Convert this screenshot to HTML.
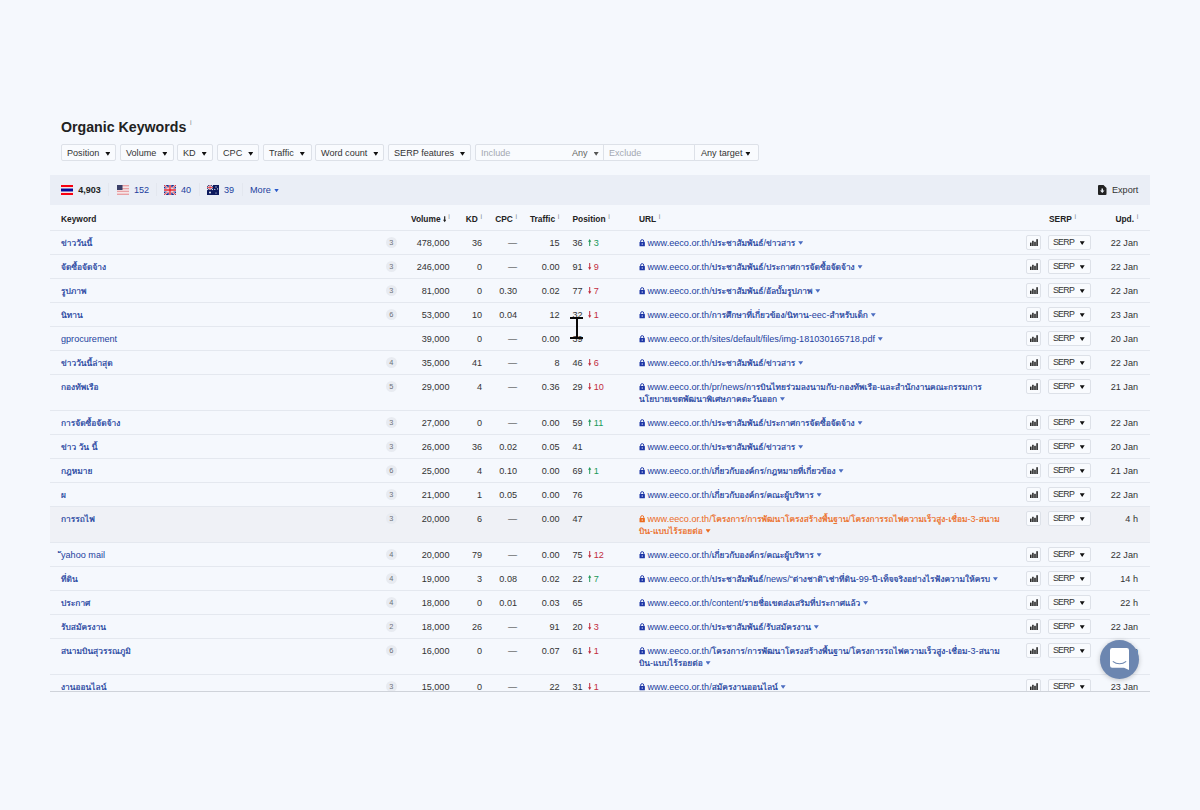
<!DOCTYPE html>
<html lang="th"><head><meta charset="utf-8"><title>Organic Keywords</title>
<style>
*{box-sizing:border-box;margin:0;padding:0}
html,body{width:1200px;height:810px;overflow:hidden}
body{background:#f5f8fd;font-family:"Liberation Sans","Loma","Noto Sans Thai","Noto Sans CJK SC",sans-serif;font-size:9.1px;line-height:12px;color:#333;position:relative}
.t{font-size:8.4px;-webkit-text-stroke:0.22px}
a{color:#1c3f9e;text-decoration:none}
h1{position:absolute;left:61px;top:118px;font-size:14.2px;line-height:18px;font-weight:bold;color:#222;white-space:nowrap}
sup.i{font-size:7px;color:#858b96;font-weight:normal;position:relative;top:0;margin-left:2.6px;vertical-align:top;line-height:8px}
.filters{position:absolute;left:61px;top:144.4px;height:17px;white-space:nowrap}
.fb{position:absolute;top:0;height:17px;border:1px solid #dde1e8;border-radius:2px;background:#f9fbfe;color:#333;line-height:17.4px;padding-left:5px;white-space:nowrap}
.fb em,.sb em{display:inline-block;width:5px;height:3.7px;background:#111;clip-path:polygon(0 0,100% 0,50% 100%);vertical-align:middle;margin-left:6px;position:relative;top:-0.2px}
.ph{color:#a3a8b1}
.bar{position:absolute;left:50px;top:175px;width:1100px;height:30px;background:#eaeef6}
.bar span,.bar a,.bar i{position:absolute;top:9px;line-height:12px;white-space:nowrap}
.bar .flag{top:10px;width:12px;height:10px;overflow:hidden}
.bar i.sep{top:8px;width:1px;height:13px;background:#e3e7ef}
.hd{position:absolute;left:50px;top:205px;width:1100px;height:26px;border-bottom:1px solid #e4e8ef;font-weight:bold;font-size:8.4px;color:#222}
.hd span{position:absolute;top:7.6px;line-height:12px;white-space:nowrap}
.hd sup.i{top:0.5px}
.tbl{position:absolute;left:50px;top:231px;width:1100px;height:461px;overflow:hidden;border-bottom:1px solid #cfd3da}
.row{position:relative;width:1100px;border-bottom:1px solid #e4e8ef;white-space:nowrap}
.row.hl{background:#eff1f6}
.row>*{position:absolute;top:5.6px;line-height:12px}
.kw{left:11px}
.wc{left:335.8px;top:5.8px!important;width:11px;height:11px;border-radius:6px;background:#e8ebf1;color:#6b7078;font-size:7.4px;line-height:11px!important;text-align:center}
.vol{right:700.5px}.kd{right:668px}.cpc{right:633px}.cpc.dash{right:633px}.tr{right:590.5px}
.pos{left:522.5px}
.pos i{font-style:normal;margin-left:5.5px}
.pos i svg{display:inline-block;width:3.4px;height:7px;margin-right:2.3px;vertical-align:-0.9px;fill:currentColor}
.pos i.u{color:#21995a}.pos i.d{color:#c22d3d}
.url{left:589px;color:#1c3f9e}
.url .lk{display:inline-block;width:6.4px;height:7.7px;margin-right:2.1px;vertical-align:-1px;color:#1c35a6}
.url em{display:inline-block;width:5px;height:3.5px;background:#4a6cc0;clip-path:polygon(0 0,100% 0,50% 100%);margin-left:2.8px;vertical-align:0.8px}
.hl .url,.hl .url a,.hl .url .lk{color:#ec6b1e}
.hl .url em{background:#ec6b1e}
.cb{left:976px;top:4px!important;width:15.4px;height:15px;border:1px solid #dde1e8;border-radius:2px;background:#f9fbfe}
.cb svg{position:absolute;left:2.9px;top:3px;width:8px;height:7.4px;fill:#2b2b2b}
.sb{left:998px;top:4px!important;width:43px;height:15px;letter-spacing:-0.7px;border:1px solid #dde1e8;border-radius:2px;background:#f9fbfe;font-size:8.8px;line-height:12.4px!important;padding-left:3.9px;color:#333}
.sb em{position:absolute;left:30.7px;top:5.2px;margin:0}
.upd{right:12px}
.chat{position:absolute;left:1099.8px;top:639.5px;width:39.2px;height:39.2px;border-radius:50%;background:#6c86b0;box-shadow:0 1px 5px rgba(0,0,0,.22)}
.chat svg{position:absolute;left:10px;top:8.9px;width:19px;height:22px}
.cur{position:absolute;left:570px;top:317.1px;width:13px;height:22.2px}
.cur:before{content:"";position:absolute;left:5.5px;top:0;width:2.1px;height:22.2px;background:#0a0a0a}
.cur i{position:absolute;left:0;width:13px;height:2px;background:#0a0a0a}
</style></head>
<body>
<h1>Organic Keywords<sup class="i" style="margin-left:3.6px;top:1px">i</sup></h1>
<div class="filters">
<span class="fb" style="left:0;width:55px">Position<em></em></span>
<span class="fb" style="left:59px;width:54px">Volume<em></em></span>
<span class="fb" style="left:116px;width:36px">KD<em></em></span>
<span class="fb" style="left:156px;width:42px">CPC<em></em></span>
<span class="fb" style="left:202px;width:48.5px">Traffic<em></em></span>
<span class="fb" style="left:254px;width:69px">Word count<em></em></span>
<span class="fb" style="left:327px;width:83px">SERP features<em></em></span>
<span class="fb" style="left:414px;width:129px;border-radius:2px 0 0 2px"><span class="ph">Include</span><span style="position:absolute;left:96px;color:#666">Any<em style="background:#555"></em></span></span>
<span class="fb" style="left:542px;width:92px;border-radius:0"><span class="ph">Exclude</span></span>
<span class="fb" style="left:633px;width:65px;border-radius:0 2px 2px 0;padding-left:6px">Any target<em style="margin-left:3px"></em></span>
</div>
<div class="bar">
<span class="flag" style="left:11px"><svg viewBox="0 0 12 9" width="12" height="10" preserveAspectRatio="none" style="display:block"><rect width="12" height="9" fill="#f80010"/><rect y="1.9" width="12" height="5.2" fill="#f4ffff"/><rect y="3.15" width="12" height="2.7" fill="#0a0a96"/></svg></span>
<span style="left:28.3px;font-weight:bold;color:#222;font-size:9px">4,903</span>
<i class="sep" style="left:58px"></i>
<span class="flag" style="left:67px"><svg viewBox="0 0 12 9" width="12" height="10" preserveAspectRatio="none" style="display:block"><rect width="12" height="9" fill="#f7eef0"/><g fill="#e8a0a4"><rect width="12" height="1.3"/><rect y="2.6" width="12" height="1.3"/><rect y="5.1" width="12" height="1.3"/><rect y="7.7" width="12" height="1.3"/></g><rect width="5.5" height="4.5" fill="#3a3f68"/></svg></span>
<a style="left:84px">152</a>
<i class="sep" style="left:106px"></i>
<span class="flag" style="left:114px"><svg viewBox="0 0 12 9" width="12" height="10" preserveAspectRatio="none" style="display:block"><rect width="12" height="9" fill="#1c2f8c"/><path d="M0 0L12 9M12 0L0 9" stroke="#fff" stroke-width="1.7"/><path d="M0 0L12 9M12 0L0 9" stroke="#e0202e" stroke-width="0.9"/><path d="M6 0V9M0 4.5H12" stroke="#fff" stroke-width="2.5"/><path d="M6 0V9M0 4.5H12" stroke="#e0202e" stroke-width="1.4"/></svg></span>
<a style="left:131px">40</a>
<i class="sep" style="left:149px"></i>
<span class="flag" style="left:157px"><svg viewBox="0 0 12 9" width="12" height="10" preserveAspectRatio="none" style="display:block"><rect width="12" height="9" fill="#0d1a5e"/><path d="M0 0L6 4.5M6 0L0 4.5" stroke="#fff" stroke-width="0.9"/><path d="M3 0V4.5M0 2.25H6" stroke="#fff" stroke-width="1.4"/><path d="M3 0V4.5M0 2.25H6" stroke="#e0202e" stroke-width="0.7"/><circle cx="3" cy="6.8" r="0.9" fill="#fff"/><circle cx="9" cy="1.7" r="0.55" fill="#fff"/><circle cx="10.6" cy="3.5" r="0.55" fill="#fff"/><circle cx="9" cy="7.2" r="0.55" fill="#fff"/><circle cx="7.8" cy="4" r="0.55" fill="#fff"/></svg></span>
<a style="left:174px">39</a>
<i class="sep" style="left:192px"></i>
<a style="left:200px">More<em style="display:inline-block;width:5px;height:3.7px;background:#2a5acb;clip-path:polygon(0 0,100% 0,50% 100%);margin-left:3.3px;vertical-align:middle;position:relative;top:-0.2px"></em></a>
<span style="left:1048px;top:10px;width:8.5px;height:10px"><svg viewBox="0 0 17 20" width="8.5" height="10" style="display:block"><path d="M2 0h9l6 6v12a2 2 0 0 1-2 2H2a2 2 0 0 1-2-2V2a2 2 0 0 1 2-2z" fill="#222"/><path d="M7 7h3v4h3l-4.5 5L4 11h3z" fill="#e9edf5"/></svg></span>
<span style="left:1062px;color:#333">Export</span>
</div>
<div class="hd">
<span style="left:11px">Keyword</span>
<span style="right:700.2px">Volume<svg width="3.4" height="6.5" viewBox="0 0 4 7" style="margin:0 -0.5px -1px 2.2px"><path d="M1.3 0h1.4v4H4L2 7 0 4h1.3z" fill="#222"/></svg><sup class="i">i</sup></span>
<span style="right:668px">KD<sup class="i">i</sup></span>
<span style="right:633px">CPC<sup class="i">i</sup></span>
<span style="right:590.8px">Traffic<sup class="i">i</sup></span>
<span style="left:522.5px">Position<sup class="i">i</sup></span>
<span style="left:589px">URL<sup class="i">i</sup></span>
<span style="left:999px">SERP<sup class="i">i</sup></span>
<span style="right:11.8px">Upd.<sup class="i">i</sup></span>
</div>
<div class="tbl">
<div class="row" style="height:24px"><a class="kw"><span class="t">ข่าววันนี้</span></a><span class="wc">3</span><span class="vol">478,000</span><span class="kd">36</span><span class="cpc dash">—</span><span class="tr">15</span><span class="pos">36<i class="u"><svg viewBox="0 0 6 13"><path d="M3 0L6 5.2H3.9V13H2.1V5.2H0z"/></svg>3</i></span><span class="url"><svg class="lk" viewBox="0 0 10 12"><path d="M2.6 5V3.4a2.4 2.4 0 0 1 4.8 0V5" fill="none" stroke="currentColor" stroke-width="1.5"/><rect x="0.8" y="4.8" width="8.4" height="6.4" rx="0.8" fill="currentColor"/><rect x="4.3" y="6.8" width="1.4" height="2.2" fill="#f5f8fd"/></svg><a>www.eeco.or.th/<span class="t">ประชาสัมพันธ์</span>/<span class="t">ข่าวสาร</span></a><em></em></span><span class="cb"><svg viewBox="0 0 8 7.4"><rect x="0" y="3.6" width="1.6" height="3.8"/><rect x="2.1" y="1.8" width="1.6" height="5.6"/><rect x="4.2" y="2.8" width="1.6" height="4.6"/><rect x="6.3" y="0.2" width="1.6" height="7.2"/></svg></span><span class="sb">SERP<em></em></span><span class="upd">22 Jan</span></div>
<div class="row" style="height:24px"><a class="kw"><span class="t">จัดซื้อจัดจ้าง</span></a><span class="wc">3</span><span class="vol">246,000</span><span class="kd">0</span><span class="cpc dash">—</span><span class="tr">0.00</span><span class="pos">91<i class="d"><svg viewBox="0 0 6 13"><path d="M3 13L6 7.8H3.9V0H2.1V7.8H0z"/></svg>9</i></span><span class="url"><svg class="lk" viewBox="0 0 10 12"><path d="M2.6 5V3.4a2.4 2.4 0 0 1 4.8 0V5" fill="none" stroke="currentColor" stroke-width="1.5"/><rect x="0.8" y="4.8" width="8.4" height="6.4" rx="0.8" fill="currentColor"/><rect x="4.3" y="6.8" width="1.4" height="2.2" fill="#f5f8fd"/></svg><a>www.eeco.or.th/<span class="t">ประชาสัมพันธ์</span>/<span class="t">ประกาศการจัดซื้อจัดจ้าง</span></a><em></em></span><span class="cb"><svg viewBox="0 0 8 7.4"><rect x="0" y="3.6" width="1.6" height="3.8"/><rect x="2.1" y="1.8" width="1.6" height="5.6"/><rect x="4.2" y="2.8" width="1.6" height="4.6"/><rect x="6.3" y="0.2" width="1.6" height="7.2"/></svg></span><span class="sb">SERP<em></em></span><span class="upd">22 Jan</span></div>
<div class="row" style="height:24px"><a class="kw"><span class="t">รูปภาพ</span></a><span class="wc">3</span><span class="vol">81,000</span><span class="kd">0</span><span class="cpc">0.30</span><span class="tr">0.02</span><span class="pos">77<i class="d"><svg viewBox="0 0 6 13"><path d="M3 13L6 7.8H3.9V0H2.1V7.8H0z"/></svg>7</i></span><span class="url"><svg class="lk" viewBox="0 0 10 12"><path d="M2.6 5V3.4a2.4 2.4 0 0 1 4.8 0V5" fill="none" stroke="currentColor" stroke-width="1.5"/><rect x="0.8" y="4.8" width="8.4" height="6.4" rx="0.8" fill="currentColor"/><rect x="4.3" y="6.8" width="1.4" height="2.2" fill="#f5f8fd"/></svg><a>www.eeco.or.th/<span class="t">ประชาสัมพันธ์</span>/<span class="t">อัลบั้มรูปภาพ</span></a><em></em></span><span class="cb"><svg viewBox="0 0 8 7.4"><rect x="0" y="3.6" width="1.6" height="3.8"/><rect x="2.1" y="1.8" width="1.6" height="5.6"/><rect x="4.2" y="2.8" width="1.6" height="4.6"/><rect x="6.3" y="0.2" width="1.6" height="7.2"/></svg></span><span class="sb">SERP<em></em></span><span class="upd">22 Jan</span></div>
<div class="row" style="height:24px"><a class="kw"><span class="t">นิทาน</span></a><span class="wc">6</span><span class="vol">53,000</span><span class="kd">10</span><span class="cpc">0.04</span><span class="tr">12</span><span class="pos">32<i class="d"><svg viewBox="0 0 6 13"><path d="M3 13L6 7.8H3.9V0H2.1V7.8H0z"/></svg>1</i></span><span class="url"><svg class="lk" viewBox="0 0 10 12"><path d="M2.6 5V3.4a2.4 2.4 0 0 1 4.8 0V5" fill="none" stroke="currentColor" stroke-width="1.5"/><rect x="0.8" y="4.8" width="8.4" height="6.4" rx="0.8" fill="currentColor"/><rect x="4.3" y="6.8" width="1.4" height="2.2" fill="#f5f8fd"/></svg><a>www.eeco.or.th/<span class="t">การศึกษาที่เกี่ยวข้อง</span>/<span class="t">นิทาน</span>-eec-<span class="t">สำหรับเด็ก</span></a><em></em></span><span class="cb"><svg viewBox="0 0 8 7.4"><rect x="0" y="3.6" width="1.6" height="3.8"/><rect x="2.1" y="1.8" width="1.6" height="5.6"/><rect x="4.2" y="2.8" width="1.6" height="4.6"/><rect x="6.3" y="0.2" width="1.6" height="7.2"/></svg></span><span class="sb">SERP<em></em></span><span class="upd">23 Jan</span></div>
<div class="row" style="height:24px"><a class="kw">gprocurement</a><span class="vol">39,000</span><span class="kd">0</span><span class="cpc dash">—</span><span class="tr">0.00</span><span class="pos">39</span><span class="url"><svg class="lk" viewBox="0 0 10 12"><path d="M2.6 5V3.4a2.4 2.4 0 0 1 4.8 0V5" fill="none" stroke="currentColor" stroke-width="1.5"/><rect x="0.8" y="4.8" width="8.4" height="6.4" rx="0.8" fill="currentColor"/><rect x="4.3" y="6.8" width="1.4" height="2.2" fill="#f5f8fd"/></svg><a>www.eeco.or.th/sites/default/files/img-181030165718.pdf</a><em></em></span><span class="cb"><svg viewBox="0 0 8 7.4"><rect x="0" y="3.6" width="1.6" height="3.8"/><rect x="2.1" y="1.8" width="1.6" height="5.6"/><rect x="4.2" y="2.8" width="1.6" height="4.6"/><rect x="6.3" y="0.2" width="1.6" height="7.2"/></svg></span><span class="sb">SERP<em></em></span><span class="upd">20 Jan</span></div>
<div class="row" style="height:24px"><a class="kw"><span class="t">ข่าววันนี้ล่าสุด</span></a><span class="wc">4</span><span class="vol">35,000</span><span class="kd">41</span><span class="cpc dash">—</span><span class="tr">8</span><span class="pos">46<i class="d"><svg viewBox="0 0 6 13"><path d="M3 13L6 7.8H3.9V0H2.1V7.8H0z"/></svg>6</i></span><span class="url"><svg class="lk" viewBox="0 0 10 12"><path d="M2.6 5V3.4a2.4 2.4 0 0 1 4.8 0V5" fill="none" stroke="currentColor" stroke-width="1.5"/><rect x="0.8" y="4.8" width="8.4" height="6.4" rx="0.8" fill="currentColor"/><rect x="4.3" y="6.8" width="1.4" height="2.2" fill="#f5f8fd"/></svg><a>www.eeco.or.th/<span class="t">ประชาสัมพันธ์</span>/<span class="t">ข่าวสาร</span></a><em></em></span><span class="cb"><svg viewBox="0 0 8 7.4"><rect x="0" y="3.6" width="1.6" height="3.8"/><rect x="2.1" y="1.8" width="1.6" height="5.6"/><rect x="4.2" y="2.8" width="1.6" height="4.6"/><rect x="6.3" y="0.2" width="1.6" height="7.2"/></svg></span><span class="sb">SERP<em></em></span><span class="upd">22 Jan</span></div>
<div class="row two" style="height:36px"><a class="kw"><span class="t">กองทัพเรือ</span></a><span class="wc">5</span><span class="vol">29,000</span><span class="kd">4</span><span class="cpc dash">—</span><span class="tr">0.36</span><span class="pos">29<i class="d"><svg viewBox="0 0 6 13"><path d="M3 13L6 7.8H3.9V0H2.1V7.8H0z"/></svg>10</i></span><span class="url"><svg class="lk" viewBox="0 0 10 12"><path d="M2.6 5V3.4a2.4 2.4 0 0 1 4.8 0V5" fill="none" stroke="currentColor" stroke-width="1.5"/><rect x="0.8" y="4.8" width="8.4" height="6.4" rx="0.8" fill="currentColor"/><rect x="4.3" y="6.8" width="1.4" height="2.2" fill="#f5f8fd"/></svg><a>www.eeco.or.th/pr/news/<span class="t">การบินไทยร่วมลงนามกับ</span>-<span class="t">กองทัพเรือ</span>-<span class="t">และสำนักงานคณะกรรมการ</span><br><span class="t">นโยบายเขตพัฒนาพิเศษภาคตะวันออก</span></a><em></em></span><span class="cb"><svg viewBox="0 0 8 7.4"><rect x="0" y="3.6" width="1.6" height="3.8"/><rect x="2.1" y="1.8" width="1.6" height="5.6"/><rect x="4.2" y="2.8" width="1.6" height="4.6"/><rect x="6.3" y="0.2" width="1.6" height="7.2"/></svg></span><span class="sb">SERP<em></em></span><span class="upd">21 Jan</span></div>
<div class="row" style="height:24px"><a class="kw"><span class="t">การจัดซื้อจัดจ้าง</span></a><span class="wc">3</span><span class="vol">27,000</span><span class="kd">0</span><span class="cpc dash">—</span><span class="tr">0.00</span><span class="pos">59<i class="u"><svg viewBox="0 0 6 13"><path d="M3 0L6 5.2H3.9V13H2.1V5.2H0z"/></svg>11</i></span><span class="url"><svg class="lk" viewBox="0 0 10 12"><path d="M2.6 5V3.4a2.4 2.4 0 0 1 4.8 0V5" fill="none" stroke="currentColor" stroke-width="1.5"/><rect x="0.8" y="4.8" width="8.4" height="6.4" rx="0.8" fill="currentColor"/><rect x="4.3" y="6.8" width="1.4" height="2.2" fill="#f5f8fd"/></svg><a>www.eeco.or.th/<span class="t">ประชาสัมพันธ์</span>/<span class="t">ประกาศการจัดซื้อจัดจ้าง</span></a><em></em></span><span class="cb"><svg viewBox="0 0 8 7.4"><rect x="0" y="3.6" width="1.6" height="3.8"/><rect x="2.1" y="1.8" width="1.6" height="5.6"/><rect x="4.2" y="2.8" width="1.6" height="4.6"/><rect x="6.3" y="0.2" width="1.6" height="7.2"/></svg></span><span class="sb">SERP<em></em></span><span class="upd">22 Jan</span></div>
<div class="row" style="height:24px"><a class="kw"><span class="t">ข่าว</span> <span class="t">วัน</span> <span class="t">นี้</span></a><span class="wc">3</span><span class="vol">26,000</span><span class="kd">36</span><span class="cpc">0.02</span><span class="tr">0.05</span><span class="pos">41</span><span class="url"><svg class="lk" viewBox="0 0 10 12"><path d="M2.6 5V3.4a2.4 2.4 0 0 1 4.8 0V5" fill="none" stroke="currentColor" stroke-width="1.5"/><rect x="0.8" y="4.8" width="8.4" height="6.4" rx="0.8" fill="currentColor"/><rect x="4.3" y="6.8" width="1.4" height="2.2" fill="#f5f8fd"/></svg><a>www.eeco.or.th/<span class="t">ประชาสัมพันธ์</span>/<span class="t">ข่าวสาร</span></a><em></em></span><span class="cb"><svg viewBox="0 0 8 7.4"><rect x="0" y="3.6" width="1.6" height="3.8"/><rect x="2.1" y="1.8" width="1.6" height="5.6"/><rect x="4.2" y="2.8" width="1.6" height="4.6"/><rect x="6.3" y="0.2" width="1.6" height="7.2"/></svg></span><span class="sb">SERP<em></em></span><span class="upd">20 Jan</span></div>
<div class="row" style="height:24px"><a class="kw"><span class="t">กฎหมาย</span></a><span class="wc">6</span><span class="vol">25,000</span><span class="kd">4</span><span class="cpc">0.10</span><span class="tr">0.00</span><span class="pos">69<i class="u"><svg viewBox="0 0 6 13"><path d="M3 0L6 5.2H3.9V13H2.1V5.2H0z"/></svg>1</i></span><span class="url"><svg class="lk" viewBox="0 0 10 12"><path d="M2.6 5V3.4a2.4 2.4 0 0 1 4.8 0V5" fill="none" stroke="currentColor" stroke-width="1.5"/><rect x="0.8" y="4.8" width="8.4" height="6.4" rx="0.8" fill="currentColor"/><rect x="4.3" y="6.8" width="1.4" height="2.2" fill="#f5f8fd"/></svg><a>www.eeco.or.th/<span class="t">เกี่ยวกับองค์กร</span>/<span class="t">กฎหมายที่เกี่ยวข้อง</span></a><em></em></span><span class="cb"><svg viewBox="0 0 8 7.4"><rect x="0" y="3.6" width="1.6" height="3.8"/><rect x="2.1" y="1.8" width="1.6" height="5.6"/><rect x="4.2" y="2.8" width="1.6" height="4.6"/><rect x="6.3" y="0.2" width="1.6" height="7.2"/></svg></span><span class="sb">SERP<em></em></span><span class="upd">21 Jan</span></div>
<div class="row" style="height:24px"><a class="kw"><span class="t">ผ</span></a><span class="wc">3</span><span class="vol">21,000</span><span class="kd">1</span><span class="cpc">0.05</span><span class="tr">0.00</span><span class="pos">76</span><span class="url"><svg class="lk" viewBox="0 0 10 12"><path d="M2.6 5V3.4a2.4 2.4 0 0 1 4.8 0V5" fill="none" stroke="currentColor" stroke-width="1.5"/><rect x="0.8" y="4.8" width="8.4" height="6.4" rx="0.8" fill="currentColor"/><rect x="4.3" y="6.8" width="1.4" height="2.2" fill="#f5f8fd"/></svg><a>www.eeco.or.th/<span class="t">เกี่ยวกับองค์กร</span>/<span class="t">คณะผู้บริหาร</span></a><em></em></span><span class="cb"><svg viewBox="0 0 8 7.4"><rect x="0" y="3.6" width="1.6" height="3.8"/><rect x="2.1" y="1.8" width="1.6" height="5.6"/><rect x="4.2" y="2.8" width="1.6" height="4.6"/><rect x="6.3" y="0.2" width="1.6" height="7.2"/></svg></span><span class="sb">SERP<em></em></span><span class="upd">22 Jan</span></div>
<div class="row hl two" style="height:36px"><a class="kw"><span class="t">การรถไฟ</span></a><span class="wc">3</span><span class="vol">20,000</span><span class="kd">6</span><span class="cpc dash">—</span><span class="tr">0.00</span><span class="pos">47</span><span class="url"><svg class="lk" viewBox="0 0 10 12"><path d="M2.6 5V3.4a2.4 2.4 0 0 1 4.8 0V5" fill="none" stroke="currentColor" stroke-width="1.5"/><rect x="0.8" y="4.8" width="8.4" height="6.4" rx="0.8" fill="currentColor"/><rect x="4.3" y="6.8" width="1.4" height="2.2" fill="#f5f8fd"/></svg><a>www.eeco.or.th/<span class="t">โครงการ</span>/<span class="t">การพัฒนาโครงสร้างพื้นฐาน</span>/<span class="t">โครงการรถไฟความเร็วสูง</span>-<span class="t">เชื่อม</span>-3-<span class="t">สนาม</span><br><span class="t">บิน</span>-<span class="t">แบบไร้รอยต่อ</span></a><em></em></span><span class="cb"><svg viewBox="0 0 8 7.4"><rect x="0" y="3.6" width="1.6" height="3.8"/><rect x="2.1" y="1.8" width="1.6" height="5.6"/><rect x="4.2" y="2.8" width="1.6" height="4.6"/><rect x="6.3" y="0.2" width="1.6" height="7.2"/></svg></span><span class="sb">SERP<em></em></span><span class="upd">4 h</span></div>
<div class="row" style="height:24px"><a class="kw"><span class="t">ั</span>yahoo mail</a><span class="wc">4</span><span class="vol">20,000</span><span class="kd">79</span><span class="cpc dash">—</span><span class="tr">0.00</span><span class="pos">75<i class="d"><svg viewBox="0 0 6 13"><path d="M3 13L6 7.8H3.9V0H2.1V7.8H0z"/></svg>12</i></span><span class="url"><svg class="lk" viewBox="0 0 10 12"><path d="M2.6 5V3.4a2.4 2.4 0 0 1 4.8 0V5" fill="none" stroke="currentColor" stroke-width="1.5"/><rect x="0.8" y="4.8" width="8.4" height="6.4" rx="0.8" fill="currentColor"/><rect x="4.3" y="6.8" width="1.4" height="2.2" fill="#f5f8fd"/></svg><a>www.eeco.or.th/<span class="t">เกี่ยวกับองค์กร</span>/<span class="t">คณะผู้บริหาร</span></a><em></em></span><span class="cb"><svg viewBox="0 0 8 7.4"><rect x="0" y="3.6" width="1.6" height="3.8"/><rect x="2.1" y="1.8" width="1.6" height="5.6"/><rect x="4.2" y="2.8" width="1.6" height="4.6"/><rect x="6.3" y="0.2" width="1.6" height="7.2"/></svg></span><span class="sb">SERP<em></em></span><span class="upd">22 Jan</span></div>
<div class="row" style="height:24px"><a class="kw"><span class="t">ที่ดิน</span></a><span class="wc">4</span><span class="vol">19,000</span><span class="kd">3</span><span class="cpc">0.08</span><span class="tr">0.02</span><span class="pos">22<i class="u"><svg viewBox="0 0 6 13"><path d="M3 0L6 5.2H3.9V13H2.1V5.2H0z"/></svg>7</i></span><span class="url"><svg class="lk" viewBox="0 0 10 12"><path d="M2.6 5V3.4a2.4 2.4 0 0 1 4.8 0V5" fill="none" stroke="currentColor" stroke-width="1.5"/><rect x="0.8" y="4.8" width="8.4" height="6.4" rx="0.8" fill="currentColor"/><rect x="4.3" y="6.8" width="1.4" height="2.2" fill="#f5f8fd"/></svg><a>www.eeco.or.th/<span class="t">ประชาสัมพันธ์</span>/news/“<span class="t">ต่างชาติ</span>”<span class="t">เช่าที่ดิน</span>-99-<span class="t">ปี</span>-<span class="t">เท็จจริงอย่างไรฟังความให้ครบ</span></a><em></em></span><span class="cb"><svg viewBox="0 0 8 7.4"><rect x="0" y="3.6" width="1.6" height="3.8"/><rect x="2.1" y="1.8" width="1.6" height="5.6"/><rect x="4.2" y="2.8" width="1.6" height="4.6"/><rect x="6.3" y="0.2" width="1.6" height="7.2"/></svg></span><span class="sb">SERP<em></em></span><span class="upd">14 h</span></div>
<div class="row" style="height:24px"><a class="kw"><span class="t">ประกาศ</span></a><span class="wc">4</span><span class="vol">18,000</span><span class="kd">0</span><span class="cpc">0.01</span><span class="tr">0.03</span><span class="pos">65</span><span class="url"><svg class="lk" viewBox="0 0 10 12"><path d="M2.6 5V3.4a2.4 2.4 0 0 1 4.8 0V5" fill="none" stroke="currentColor" stroke-width="1.5"/><rect x="0.8" y="4.8" width="8.4" height="6.4" rx="0.8" fill="currentColor"/><rect x="4.3" y="6.8" width="1.4" height="2.2" fill="#f5f8fd"/></svg><a>www.eeco.or.th/content/<span class="t">รายชื่อเขตส่งเสริมที่ประกาศแล้ว</span></a><em></em></span><span class="cb"><svg viewBox="0 0 8 7.4"><rect x="0" y="3.6" width="1.6" height="3.8"/><rect x="2.1" y="1.8" width="1.6" height="5.6"/><rect x="4.2" y="2.8" width="1.6" height="4.6"/><rect x="6.3" y="0.2" width="1.6" height="7.2"/></svg></span><span class="sb">SERP<em></em></span><span class="upd">22 h</span></div>
<div class="row" style="height:24px"><a class="kw"><span class="t">รับสมัครงาน</span></a><span class="wc">2</span><span class="vol">18,000</span><span class="kd">26</span><span class="cpc dash">—</span><span class="tr">91</span><span class="pos">20<i class="d"><svg viewBox="0 0 6 13"><path d="M3 13L6 7.8H3.9V0H2.1V7.8H0z"/></svg>3</i></span><span class="url"><svg class="lk" viewBox="0 0 10 12"><path d="M2.6 5V3.4a2.4 2.4 0 0 1 4.8 0V5" fill="none" stroke="currentColor" stroke-width="1.5"/><rect x="0.8" y="4.8" width="8.4" height="6.4" rx="0.8" fill="currentColor"/><rect x="4.3" y="6.8" width="1.4" height="2.2" fill="#f5f8fd"/></svg><a>www.eeco.or.th/<span class="t">ประชาสัมพันธ์</span>/<span class="t">รับสมัครงาน</span></a><em></em></span><span class="cb"><svg viewBox="0 0 8 7.4"><rect x="0" y="3.6" width="1.6" height="3.8"/><rect x="2.1" y="1.8" width="1.6" height="5.6"/><rect x="4.2" y="2.8" width="1.6" height="4.6"/><rect x="6.3" y="0.2" width="1.6" height="7.2"/></svg></span><span class="sb">SERP<em></em></span><span class="upd">22 Jan</span></div>
<div class="row two" style="height:36px"><a class="kw"><span class="t">สนามบินสุวรรณภูมิ</span></a><span class="wc">6</span><span class="vol">16,000</span><span class="kd">0</span><span class="cpc dash">—</span><span class="tr">0.07</span><span class="pos">61<i class="d"><svg viewBox="0 0 6 13"><path d="M3 13L6 7.8H3.9V0H2.1V7.8H0z"/></svg>1</i></span><span class="url"><svg class="lk" viewBox="0 0 10 12"><path d="M2.6 5V3.4a2.4 2.4 0 0 1 4.8 0V5" fill="none" stroke="currentColor" stroke-width="1.5"/><rect x="0.8" y="4.8" width="8.4" height="6.4" rx="0.8" fill="currentColor"/><rect x="4.3" y="6.8" width="1.4" height="2.2" fill="#f5f8fd"/></svg><a>www.eeco.or.th/<span class="t">โครงการ</span>/<span class="t">การพัฒนาโครงสร้างพื้นฐาน</span>/<span class="t">โครงการรถไฟความเร็วสูง</span>-<span class="t">เชื่อม</span>-3-<span class="t">สนาม</span><br><span class="t">บิน</span>-<span class="t">แบบไร้รอยต่อ</span></a><em></em></span><span class="cb"><svg viewBox="0 0 8 7.4"><rect x="0" y="3.6" width="1.6" height="3.8"/><rect x="2.1" y="1.8" width="1.6" height="5.6"/><rect x="4.2" y="2.8" width="1.6" height="4.6"/><rect x="6.3" y="0.2" width="1.6" height="7.2"/></svg></span><span class="sb">SERP<em></em></span><span class="upd">22 Jan</span></div>
<div class="row" style="height:17px"><a class="kw"><span class="t">งานออนไลน์</span></a><span class="wc">3</span><span class="vol">15,000</span><span class="kd">0</span><span class="cpc dash">—</span><span class="tr">22</span><span class="pos">31<i class="d"><svg viewBox="0 0 6 13"><path d="M3 13L6 7.8H3.9V0H2.1V7.8H0z"/></svg>1</i></span><span class="url"><svg class="lk" viewBox="0 0 10 12"><path d="M2.6 5V3.4a2.4 2.4 0 0 1 4.8 0V5" fill="none" stroke="currentColor" stroke-width="1.5"/><rect x="0.8" y="4.8" width="8.4" height="6.4" rx="0.8" fill="currentColor"/><rect x="4.3" y="6.8" width="1.4" height="2.2" fill="#f5f8fd"/></svg><a>www.eeco.or.th/<span class="t">สมัครงานออนไลน์</span></a><em></em></span><span class="cb"><svg viewBox="0 0 8 7.4"><rect x="0" y="3.6" width="1.6" height="3.8"/><rect x="2.1" y="1.8" width="1.6" height="5.6"/><rect x="4.2" y="2.8" width="1.6" height="4.6"/><rect x="6.3" y="0.2" width="1.6" height="7.2"/></svg></span><span class="sb">SERP<em></em></span><span class="upd">23 Jan</span></div>
</div>
<div class="cur"><i style="top:0"></i><i style="top:20.2px"></i></div>
<div class="chat"><svg viewBox="0 0 19 22"><path d="M2.2 0h14.6a2.2 2.2 0 0 1 2.2 2.2V22l-5-2.3H2.2a2.2 2.2 0 0 1-2.2-2.2V2.2a2.2 2.2 0 0 1 2.2-2.2z" fill="#fff"/><path d="M3.2 13.6c3.4 2.8 9.2 2.8 12.6 0" fill="none" stroke="#6c86b0" stroke-width="1.1" stroke-linecap="round"/></svg></div>
</body></html>
